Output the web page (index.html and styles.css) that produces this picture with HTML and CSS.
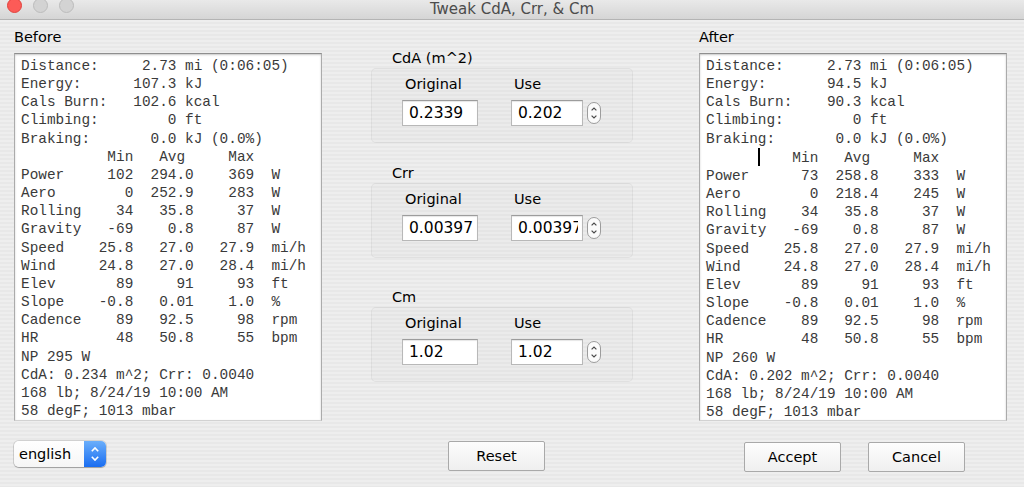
FILE: index.html
```html
<!DOCTYPE html>
<html lang="en">
<head>
    <meta charset="UTF-8">
    <meta name="viewport" content="width=device-width, initial-scale=1.0" />
    <title>Tweak CdA, Crr, &amp; Cm</title>
    <link rel="stylesheet" href="styles.css">
</head>
<body>
    <header class="titlebar">
        <div class="lights">
            <span class="light light-close"></span>
            <span class="light"></span>
            <span class="light"></span>
        </div>
        <div class="title">Tweak CdA, Crr, &amp; Cm</div>
    </header>
    <main class="content">
        <section class="summary">
            <h2 class="panel-title">Before</h2>
<pre class="readout">Distance:     2.73 mi (0:06:05)
Energy:      107.3 kJ
Cals Burn:   102.6 kcal
Climbing:        0 ft
Braking:       0.0 kJ (0.0%)
          Min   Avg     Max
Power     102  294.0    369  W
Aero        0  252.9    283  W
Rolling    34   35.8     37  W
Gravity   -69    0.8     87  W
Speed    25.8   27.0   27.9  mi/h
Wind     24.8   27.0   28.4  mi/h
Elev       89     91     93  ft
Slope    -0.8   0.01    1.0  %
Cadence    89   92.5     98  rpm
HR         48   50.8     55  bpm
NP 295 W
CdA: 0.234 m^2; Crr: 0.0040
168 lb; 8/24/19 10:00 AM
58 degF; 1013 mbar</pre>
        </section>

        <section class="coeffs">
            <div class="coeff">
                <div class="coeff-title">CdA (m^2)</div>
                <div class="coeff-box">
                    <div class="field field-orig">
                        <label for="cda_orig">Original</label>
                        <input id="cda_orig" value="0.2339" readonly>
                    </div>
                    <div class="field">
                        <label for="cda_use">Use</label>
                        <div class="spin">
                            <input id="cda_use" value="0.202">
                            <svg class="stepper" width="14" height="22" viewBox="0 0 14 22">
                                <rect x="0.5" y="0.5" width="13" height="21" rx="6.5" fill="#fbfbfb" stroke="#9c9c9c"/>
                                <path d="M4.6 8.4 L7 6 L9.4 8.4" fill="none" stroke="#4a4a4a" stroke-width="1.2"/>
                                <path d="M4.6 13.6 L7 16 L9.4 13.6" fill="none" stroke="#4a4a4a" stroke-width="1.2"/>
                            </svg>
                        </div>
                    </div>
                </div>
            </div>

            <div class="coeff coeff-crr">
                <div class="coeff-title">Crr</div>
                <div class="coeff-box">
                    <div class="field field-orig">
                        <label for="crr_orig">Original</label>
                        <input id="crr_orig" value="0.00397" readonly>
                    </div>
                    <div class="field">
                        <label for="crr_use">Use</label>
                        <div class="spin">
                            <input id="crr_use" value="0.00397">
                            <svg class="stepper" width="14" height="22" viewBox="0 0 14 22">
                                <rect x="0.5" y="0.5" width="13" height="21" rx="6.5" fill="#fbfbfb" stroke="#9c9c9c"/>
                                <path d="M4.6 8.4 L7 6 L9.4 8.4" fill="none" stroke="#4a4a4a" stroke-width="1.2"/>
                                <path d="M4.6 13.6 L7 16 L9.4 13.6" fill="none" stroke="#4a4a4a" stroke-width="1.2"/>
                            </svg>
                        </div>
                    </div>
                </div>
            </div>

            <div class="coeff coeff-cm">
                <div class="coeff-title">Cm</div>
                <div class="coeff-box">
                    <div class="field field-orig">
                        <label for="cm_orig">Original</label>
                        <input id="cm_orig" value="1.02" readonly>
                    </div>
                    <div class="field">
                        <label for="cm_use">Use</label>
                        <div class="spin">
                            <input id="cm_use" value="1.02">
                            <svg class="stepper" width="14" height="22" viewBox="0 0 14 22">
                                <rect x="0.5" y="0.5" width="13" height="21" rx="6.5" fill="#fbfbfb" stroke="#9c9c9c"/>
                                <path d="M4.6 8.4 L7 6 L9.4 8.4" fill="none" stroke="#4a4a4a" stroke-width="1.2"/>
                                <path d="M4.6 13.6 L7 16 L9.4 13.6" fill="none" stroke="#4a4a4a" stroke-width="1.2"/>
                            </svg>
                        </div>
                    </div>
                </div>
            </div>
        </section>

        <section class="summary">
            <h2 class="panel-title">After</h2>
<pre class="readout">Distance:     2.73 mi (0:06:05)
Energy:       94.5 kJ
Cals Burn:    90.3 kcal
Climbing:        0 ft
Braking:       0.0 kJ (0.0%)
      <span class="caret"></span>    Min   Avg     Max
Power      73  258.8    333  W
Aero        0  218.4    245  W
Rolling    34   35.8     37  W
Gravity   -69    0.8     87  W
Speed    25.8   27.0   27.9  mi/h
Wind     24.8   27.0   28.4  mi/h
Elev       89     91     93  ft
Slope    -0.8   0.01    1.0  %
Cadence    89   92.5     98  rpm
HR         48   50.8     55  bpm
NP 260 W
CdA: 0.202 m^2; Crr: 0.0040
168 lb; 8/24/19 10:00 AM
58 degF; 1013 mbar</pre>
        </section>
    </main>

    <footer class="actions">
        <div class="lang">
            <span class="lang-value">english</span>
            <span class="lang-arrows">
                <svg width="22" height="26" viewBox="0 0 22 26">
                    <path d="M7.8 10.2 L11 7 L14.2 10.2" fill="none" stroke="#fff" stroke-width="1.6"/>
                    <path d="M7.8 15.8 L11 19 L14.2 15.8" fill="none" stroke="#fff" stroke-width="1.6"/>
                </svg>
            </span>
        </div>
        <div class="reset-cell">
            <button type="button">Reset</button>
        </div>
        <div class="confirm">
            <button type="button">Accept</button>
            <button type="button">Cancel</button>
        </div>
    </footer>
</body>
</html>
```

FILE: styles.css
```css
* {
    box-sizing: border-box;
}

html {
    font-family: "DejaVu Sans", sans-serif;
    font-size: 14.5px;
}

body {
    margin: 0;
    width: 1024px;
    height: 487px;
    overflow: hidden;
    color: #000;
    background: repeating-linear-gradient(to bottom, #eeeeee 0, #eeeeee 2px, #e8e8e8 2px, #e8e8e8 4px);
}

.titlebar {
    height: 20px;
    display: grid;
    grid-template-columns: 1fr auto 1fr;
    background: linear-gradient(#e9e9e9, #d5d5d5);
    border-bottom: 1px solid #b4b4b4;
}

.lights {
    display: flex;
    gap: 11px;
    padding-left: 6.5px;
    margin-top: -2px;
}

.light {
    width: 15px;
    height: 15px;
    border-radius: 50%;
    background: #d3d3d3;
    border: 1px solid #bcbcbc;
}

.light-close {
    background: #fc5b57;
    border-color: #e0443e;
}

.title {
    font-size: 15px;
    line-height: 18px;
    color: #4c4c4c;
}

.content {
    display: grid;
    grid-template-columns: 308px 1fr 308px;
    padding: 9px 17px 0 14px;
}

.panel-title {
    margin: 0 0 7px;
    font-size: 14.5px;
    font-weight: normal;
    line-height: 17px;
}

.readout {
    margin: 0;
    height: 368px;
    padding: 3px 6px;
    background: #fff;
    border: 1px solid #ababab;
    border-top-color: #8e8e8e;
    border-bottom-color: #d2d2d2;
    box-shadow: inset 0 1px 2px rgba(0, 0, 0, 0.22);
    font-family: "Liberation Mono", monospace;
    font-size: 14.4px;
    line-height: 18.15px;
    color: #3a3a3a;
}

.caret {
    display: inline-block;
    width: 0;
    height: 18px;
    vertical-align: -4px;
    border-left: 2px solid #000;
    margin-right: -2px;
}

.coeffs {
    padding: 20.5px 66px 0 49px;
}

.coeff-title {
    margin: 0 0 1px 21px;
    line-height: 17px;
}

.coeff-crr {
    margin-top: 22.5px;
}

.coeff-cm {
    margin-top: 31px;
}

.coeff-box {
    display: flex;
    gap: 33px;
    height: 75px;
    padding: 7px 0 0 30px;
    border: 1px solid rgba(0, 0, 0, 0.05);
    border-radius: 5px;
    background: rgba(0, 0, 0, 0.01);
}

.field {
    display: flex;
    flex-direction: column;
    gap: 7px;
}

.field label {
    line-height: 17px;
    padding-left: 3px;
}

.field input {
    width: 72px;
    height: 26px;
    margin: 0;
    padding: 0 4px 0 6px;
    font-family: "DejaVu Sans", sans-serif;
    font-size: 15.5px;
    color: #000;
    background: #fff;
    border: 1px solid #b8b8b8;
    border-top-color: #9c9c9c;
    box-shadow: inset 0 1px 1px rgba(0, 0, 0, 0.1);
    outline: none;
}

.field-orig input {
    width: 76px;
}

.spin {
    display: flex;
    align-items: center;
    gap: 4px;
}

.stepper {
    display: block;
}

.actions {
    display: grid;
    grid-template-columns: 308px 1fr 308px;
    padding: 0 17px 0 14px;
    margin-top: 20px;
}

.lang {
    display: flex;
    width: 92px;
    height: 26px;
    border-radius: 5px;
    overflow: hidden;
    background: linear-gradient(#ffffff, #f6f6f6);
    box-shadow: 0 0 0 1px rgba(0, 0, 0, 0.12), 0 1px 1px rgba(0, 0, 0, 0.22);
}

.lang-value {
    flex: 1;
    padding-left: 5px;
    line-height: 26px;
}

.lang-arrows {
    width: 22px;
    background: linear-gradient(#6aaefb, #1a6df1);
}

.lang-arrows svg {
    display: block;
}

.reset-cell {
    padding-left: 126px;
}

.confirm {
    display: flex;
    gap: 27px;
    padding-left: 45px;
}

button {
    width: 97px;
    height: 30px;
    padding: 0;
    font-family: "DejaVu Sans", sans-serif;
    font-size: 14.5px;
    color: #000;
    background: linear-gradient(#fdfdfd, #efefef);
    border: 1px solid #a9a9a9;
    border-radius: 2px;
    cursor: pointer;
}

.confirm button {
    margin-top: 1px;
}
```
